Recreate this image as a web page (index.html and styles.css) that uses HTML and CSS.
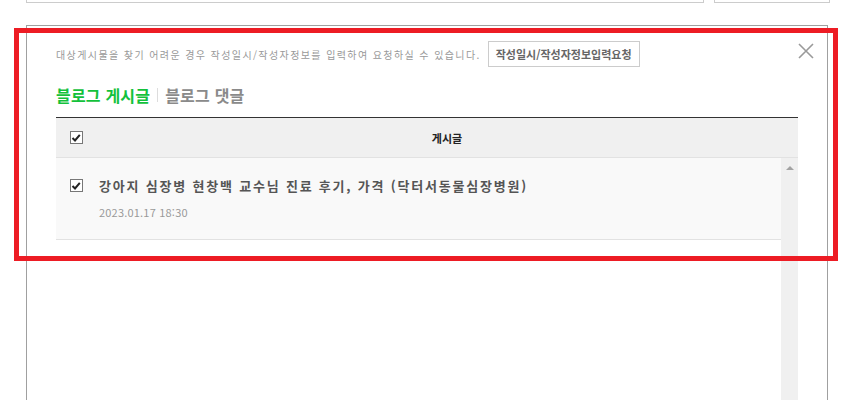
FILE: index.html
```html
<!DOCTYPE html>
<html lang="ko">
<head>
    <meta charset="UTF-8">
    <title>게시글 선택</title>
    <link rel="stylesheet" href="styles.css">
</head>
<body>

<div class="top-row">
    <div class="top-box wide"></div>
    <div class="top-box small"></div>
</div>

<div class="panel">
    <div class="notice">
        <span class="notice-text">대상게시물을 찾기 어려운 경우 작성일시/작성자정보를 입력하여 요청하실 수 있습니다.</span>
        <button class="req-btn">작성일시/작성자정보입력요청</button>
    </div>
    <button class="close-btn" title="닫기">
        <svg width="16" height="16" viewBox="0 0 16 16"><path d="M1 1 L15 15 M15 1 L1 15" stroke="#9a9a9a" stroke-width="1.6" fill="none"/></svg>
    </button>

    <div class="tabs">
        <a class="tab active" href="javascript:void(0);">블로그 게시글</a>
        <span class="tab-sep"></span>
        <a class="tab" href="javascript:void(0);">블로그 댓글</a>
    </div>

    <div class="table">
        <div class="thead">
            <div class="col-check"><span class="chk"><svg width="10" height="10" viewBox="0 0 10 10"><path d="M1.5 5 L4 7.5 L8.8 1.8" stroke="#222" stroke-width="2" fill="none"/></svg></span></div>
            <div class="col-title">게시글</div>
        </div>
        <div class="tbody">
            <div class="rows">
                <div class="row">
                    <div class="col-check"><span class="chk"><svg width="10" height="10" viewBox="0 0 10 10"><path d="M1.5 5 L4 7.5 L8.8 1.8" stroke="#222" stroke-width="2" fill="none"/></svg></span></div>
                    <div class="post">
                        <div class="post-title">강아지 심장병 현창백 교수님 진료 후기, 가격 (닥터서동물심장병원)</div>
                        <div class="post-date">2023.01.17 18:30</div>
                    </div>
                </div>
            </div>
            <div class="scrollbar"><span class="arrow-up"></span></div>
        </div>
    </div>
</div>

<div class="highlight"></div>

</body>
</html>
```

FILE: styles.css
```css
body { margin: 0; background: #fff; font-family: "Noto Sans CJK KR", "Noto Sans", sans-serif; height: 400px; overflow: hidden; }

.top-row { display: flex; gap: 10px; padding-left: 26px; height: 4px; }
.top-box { border: 1px solid #ccc; border-top: none; height: 3px; box-sizing: border-box; }
.top-box.wide { width: 678px; }
.top-box.small { width: 116px; }

.panel { position: relative; margin: 21px 0 0 26px; width: 802px; height: 375px; box-sizing: border-box; border: 1px solid #a0a0a0; border-bottom: none; padding: 15px 29px 0 29px; }

.notice { display: flex; align-items: center; gap: 7px; }
.notice-text { font-size: 10px; color: #999; letter-spacing: 1.4px; }
.req-btn { height: 26px; padding: 0 7px; border: 1px solid #ccc; background: #fff; font-family: inherit; font-size: 11px; font-weight: bold; color: #666; letter-spacing: 0; }

.close-btn { position: absolute; top: 17px; right: 13px; padding: 0; border: 0; background: none; width: 16px; height: 16px; }
.close-btn svg { display: block; }

.tabs { display: flex; align-items: center; margin-top: 16px; height: 24px; }
.tab { font-size: 16px; font-weight: bold; color: #8a8a8a; text-decoration: none; letter-spacing: 0.2px; }
.tab.active { color: #13c13b; }
.tab-sep { width: 1px; height: 14px; background: #ddd; margin: 0 7px; }

.table { margin-top: 10px; border-top: 1px solid #333; }
.thead { display: flex; align-items: center; height: 39px; background: #f0f0f0; border-bottom: 1px solid #e2e2e2; }
.col-check { width: 40px; display: flex; justify-content: center; flex: none; }
.col-title { flex: 1; text-align: center; font-size: 11px; font-weight: bold; color: #222; }

.chk { display: inline-flex; align-items: center; justify-content: center; width: 11px; height: 11px; border: 1px solid #777; background: #fff; }
.chk svg { display: block; }

.tbody { display: flex; height: 243px; }
.rows { flex: 1; }
.row { display: flex; align-items: flex-start; height: 82px; background: #f9f9f9; border-bottom: 1px solid #e2e2e2; padding-top: 21px; box-sizing: border-box; }
.post { margin-left: 3px; }
.post-title { font-size: 13px; font-weight: bold; color: #555; letter-spacing: 1.8px; line-height: 13px; }
.post-date { margin-top: 15px; font-size: 11px; color: #999; line-height: 11px; letter-spacing: 0.2px; }

.scrollbar { width: 17px; background: #f0f0f0; display: flex; justify-content: center; padding-top: 8px; box-sizing: border-box; }
.arrow-up { width: 0; height: 0; border-left: 4px solid transparent; border-right: 4px solid transparent; border-bottom: 4px solid #a3a3a3; }

.highlight { position: absolute; left: 14px; top: 28px; width: 824px; height: 233px; border: 5px solid #ed1c24; box-sizing: border-box; pointer-events: none; }
```
